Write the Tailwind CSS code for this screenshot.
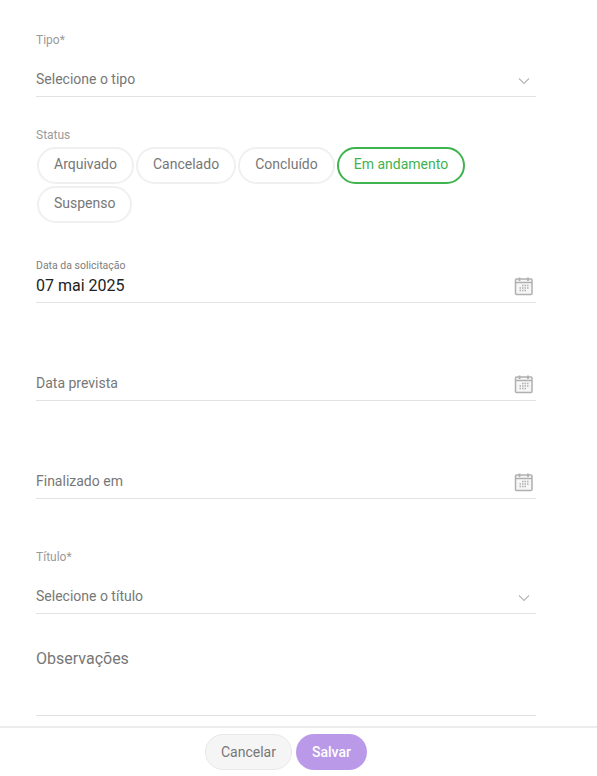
<!DOCTYPE html>
<html lang="pt-BR">
<head>
  <meta charset="UTF-8">
  <meta name="viewport" content="width=device-width, initial-scale=1.0">
  <title>Nova solicitação</title>
  <script src="https://cdn.jsdelivr.net/npm/@tailwindcss/browser@4"></script>
</head>
<body class="bg-white font-['Roboto',sans-serif] h-[776px] w-[597px] overflow-hidden">
  <main class="w-[536px] pl-9 pt-[33px] h-[726px]">
    <!-- Tipo -->
    <label class="block text-xs leading-[15px] text-[#9a9a9a]">Tipo*</label>
    <div class="flex items-center justify-between h-[49px] pt-[14px] border-b border-[#e2e2e2] text-sm text-[#777777]">
      <span>Selecione o tipo</span>
      <svg class="w-3 h-3 mr-[6px] mt-1 text-[#b4b4bc]" viewBox="0 0 12 12" fill="none" stroke="currentColor" stroke-width="1.1"><path d="M1 3.5 6 8.5 11 3.5"/></svg>
    </div>

    <!-- Status -->
    <label class="block text-xs leading-[15px] text-[#9a9a9a] mt-[31px]">Status</label>
    <div class="flex flex-wrap gap-[2px] pl-px w-[480px] mt-[4px]">
      <button class="h-[37px] px-[15px] pb-[3px] rounded-full border-2 border-[#f0f0f0] text-sm text-[#777777]">Arquivado</button>
      <button class="h-[37px] px-[15px] pb-[3px] rounded-full border-2 border-[#f0f0f0] text-sm text-[#777777]">Cancelado</button>
      <button class="h-[37px] px-[15px] pb-[3px] rounded-full border-2 border-[#f0f0f0] text-sm text-[#777777]">Concluído</button>
      <button class="h-[37px] px-[15px] pb-[3px] rounded-full border-2 border-[#3fb34f] text-sm text-[#3fb34f]">Em andamento</button>
      <button class="h-[37px] px-[15px] pb-[3px] rounded-full border-2 border-[#f0f0f0] text-sm text-[#777777]">Suspenso</button>
    </div>

    <!-- Datas -->
    <div class="flex items-end justify-between h-[46px] mt-[34px] border-b border-[#e2e2e2] pb-[7px]">
      <div>
        <div class="text-[10.5px] leading-[13px] text-[#7d7d7d]">Data da solicitação</div>
        <div class="text-base leading-[19px] mt-[4px] text-[#222222]">07 mai 2025</div>
      </div>
      <svg class="w-5 h-5 mr-[2px] mb-[-1px] text-[#b0b0b0]" viewBox="0 0 20 20" fill="none"><rect x="1.5" y="3" width="16.5" height="15.5" rx="1" fill="#f6f6f6" stroke="currentColor" stroke-width="1.5"/><path d="M1.5 6.5h16.5" stroke="currentColor" stroke-width="1.5"/><path d="M5.5 1.5v3.5M14 1.5v3.5" stroke="currentColor" stroke-width="1.8"/><path d="M8 9.5h1.5M10.5 9.5h1.5M13 9.5h1.5M5.5 12h1.5M8 12h1.5M10.5 12h1.5M13 12h1.5M5.5 14.5h1.5M8 14.5h1.5M10.5 14.5h1.5" stroke="currentColor" stroke-width="1.5"/></svg>
    </div>

    <div class="flex items-end justify-between h-[45px] mt-[53px] border-b border-[#e2e2e2] pb-[6px]">
      <span class="text-sm leading-[19px] pb-[1px] text-[#777777]">Data prevista</span>
      <svg class="w-5 h-5 mr-[2px] text-[#b0b0b0]" viewBox="0 0 20 20" fill="none"><rect x="1.5" y="3" width="16.5" height="15.5" rx="1" fill="#f6f6f6" stroke="currentColor" stroke-width="1.5"/><path d="M1.5 6.5h16.5" stroke="currentColor" stroke-width="1.5"/><path d="M5.5 1.5v3.5M14 1.5v3.5" stroke="currentColor" stroke-width="1.8"/><path d="M8 9.5h1.5M10.5 9.5h1.5M13 9.5h1.5M5.5 12h1.5M8 12h1.5M10.5 12h1.5M13 12h1.5M5.5 14.5h1.5M8 14.5h1.5M10.5 14.5h1.5" stroke="currentColor" stroke-width="1.5"/></svg>
    </div>

    <div class="flex items-end justify-between h-[45px] mt-[53px] border-b border-[#e2e2e2] pb-[6px]">
      <span class="text-sm leading-[19px] pb-[1px] text-[#777777]">Finalizado em</span>
      <svg class="w-5 h-5 mr-[2px] text-[#b0b0b0]" viewBox="0 0 20 20" fill="none"><rect x="1.5" y="3" width="16.5" height="15.5" rx="1" fill="#f6f6f6" stroke="currentColor" stroke-width="1.5"/><path d="M1.5 6.5h16.5" stroke="currentColor" stroke-width="1.5"/><path d="M5.5 1.5v3.5M14 1.5v3.5" stroke="currentColor" stroke-width="1.8"/><path d="M8 9.5h1.5M10.5 9.5h1.5M13 9.5h1.5M5.5 12h1.5M8 12h1.5M10.5 12h1.5M13 12h1.5M5.5 14.5h1.5M8 14.5h1.5M10.5 14.5h1.5" stroke="currentColor" stroke-width="1.5"/></svg>
    </div>

    <!-- Titulo -->
    <label class="block text-xs leading-[15px] text-[#9a9a9a] mt-[51px]">Título*</label>
    <div class="flex items-center justify-between h-[49px] pt-[14px] border-b border-[#e2e2e2] text-sm text-[#777777]">
      <span>Selecione o título</span>
      <svg class="w-3 h-3 mr-[6px] mt-1 text-[#b4b4bc]" viewBox="0 0 12 12" fill="none" stroke="currentColor" stroke-width="1.1"><path d="M1 3.5 6 8.5 11 3.5"/></svg>
    </div>

    <!-- Observacoes -->
    <div class="h-[102px] border-b border-[#e2e2e2] pt-[35px] text-base leading-[19px] text-[#777777]">Observações</div>
  </main>

  <footer class="flex justify-center gap-1 border-t-2 border-[#ececec] pt-[6px] pr-[25px]">
    <button class="h-[36px] w-[87px] rounded-full border border-[#e8e8e8] bg-[#f5f5f5] text-sm text-[#777777]">Cancelar</button>
    <button class="h-[36px] w-[71px] rounded-full bg-[#ba9ae8] text-sm font-medium text-white">Salvar</button>
  </footer>
</body>
</html>
